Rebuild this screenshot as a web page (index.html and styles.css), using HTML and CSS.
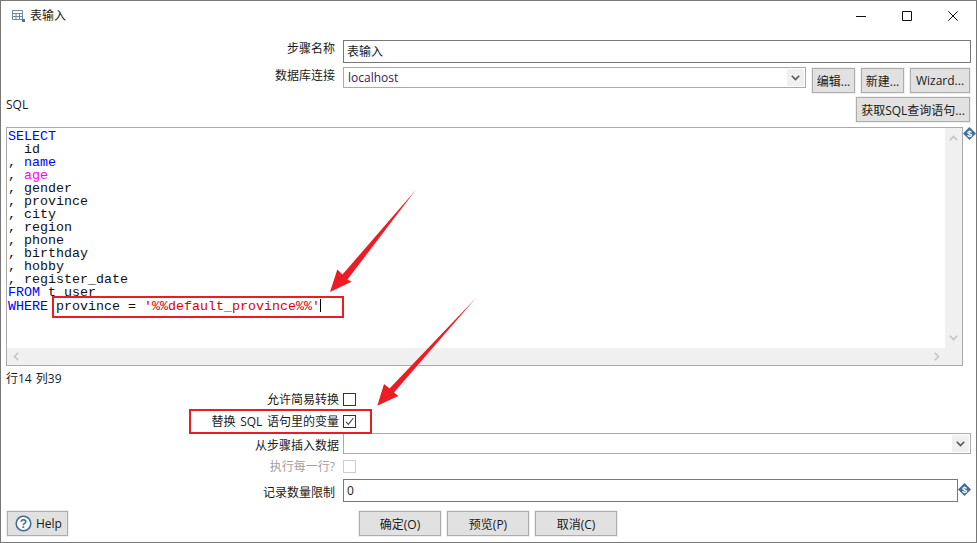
FILE: index.html
```html
<!DOCTYPE html>
<html lang="zh-CN">
<head>
<meta charset="utf-8">
<title>表输入</title>
<link rel="stylesheet" href="styles.css">
</head>
<body>
<div class="window">
  <header class="titlebar">
    <svg class="title-icon" width="14" height="14" viewBox="0 0 14 14"><path d="M.5 1.5h10v9H.5zM.5 4.5h10M.5 7.5h10M4 4.5v6M7.5 4.5v6" fill="none" stroke="#6f8ba0"/><rect x="10" y="10" width="3" height="3" fill="#4a7391"/></svg>
    <span class="title-text">表输入</span>
    <div class="win-controls">
      <svg width="10" height="10" viewBox="0 0 10 10"><path d="M0 5.5h10" stroke="#111"/></svg>
      <svg width="10" height="10" viewBox="0 0 10 10"><path d="M.5.5h9v9h-9z" fill="none" stroke="#111"/></svg>
      <svg width="10" height="10" viewBox="0 0 10 10"><path d="M.3.3l9.4 9.4M9.7.3L.3 9.7" stroke="#111" fill="none"/></svg>
    </div>
  </header>
  <main class="form">
    <div class="row row-name">
      <label class="label label-top">步骤名称</label>
      <div class="input dark grow">表输入</div>
    </div>
    <div class="row row-conn">
      <label class="label label-top">数据库连接</label>
      <div class="input select conn"><span class="conn-value">localhost</span><span class="chevbox"><svg width="9" height="6" viewBox="0 0 9 6"><path d="M.8.8l3.7 3.7L8.2.8" fill="none" stroke="#555" stroke-width="1.6"/></svg></span></div>
      <div class="conn-buttons">
        <button class="btn btn-edit">编辑...</button>
        <button class="btn btn-edit">新建...</button>
        <button class="btn btn-wizard">Wizard...</button>
      </div>
    </div>
    <div class="row-sql">
      <span class="sql-label">SQL</span>
      <button class="btn btn-query">获取SQL查询语句...</button>
    </div>
    <div class="editor-row">
      <div class="editor">
        <pre class="code"><span class="kw">SELECT</span>
  id
, <span class="kw">name</span>
, <span class="fn">age</span>
, gender
, province
, city
, region
, phone
, birthday
, hobby
, register_date
<span class="kw">FROM</span> t_user
<span class="kw">WHERE</span> province = <span class="str">'%%default_province%%'</span><span class="caret"></span></pre>
        <div class="vscroll">
          <span class="sb-btn"><svg width="9" height="6" viewBox="0 0 9 6"><path d="M.8 5.2l3.7-3.7 3.7 3.7" fill="none" stroke="#c4c4c4" stroke-width="1.6"/></svg></span>
          <span class="sb-btn"><svg width="9" height="6" viewBox="0 0 9 6"><path d="M.8.8l3.7 3.7L8.2.8" fill="none" stroke="#c4c4c4" stroke-width="1.6"/></svg></span>
        </div>
        <div class="hscroll">
          <span class="sb-btn-h"><svg width="6" height="9" viewBox="0 0 6 9"><path d="M5.2.8L1.5 4.5l3.7 3.7" fill="none" stroke="#c4c4c4" stroke-width="1.6"/></svg></span>
          <span class="sb-btn-h"><svg width="6" height="9" viewBox="0 0 6 9"><path d="M.8.8l3.7 3.7L.8 8.2" fill="none" stroke="#c4c4c4" stroke-width="1.6"/></svg></span>
        </div>
      </div>
      <svg class="var-icon" width="13" height="13" viewBox="0 0 13 13"><path d="M6.5 0L13 6.5 6.5 13 0 6.5z" fill="#3f6f95"/><text x="6.5" y="9.6" text-anchor="middle" class="var-s">$</text></svg>
    </div>
    <div class="status">行14 列39</div>
    <div class="row row-opt1">
      <label class="label label-wide label-up">允许简易转换</label>
      <span class="check"></span>
    </div>
    <div class="row row-opt2">
      <label class="label label-wide label-up label-spaced">替换 SQL 语句里的变量</label>
      <span class="check"><svg width="11" height="11" viewBox="0 0 11 11"><path d="M2 5.8l2.4 2.6L9.4 2" fill="none" stroke="#444" stroke-width="1.1"/></svg></span>
    </div>
    <div class="row row-step">
      <label class="label label-wide">从步骤插入数据</label>
      <div class="input select grow"><span class="chevbox"><svg width="9" height="6" viewBox="0 0 9 6"><path d="M.8.8l3.7 3.7L8.2.8" fill="none" stroke="#555" stroke-width="1.6"/></svg></span></div>
    </div>
    <div class="row row-exec">
      <label class="label label-off label-up">执行每一行?</label>
      <span class="check check-off"></span>
    </div>
    <div class="row row-limit">
      <label class="label label-limit">记录数量限制</label>
      <div class="input dark limit">0</div>
      <svg class="var-icon" width="13" height="13" viewBox="0 0 13 13"><path d="M6.5 0L13 6.5 6.5 13 0 6.5z" fill="#3f6f95"/><text x="6.5" y="9.6" text-anchor="middle" class="var-s">$</text></svg>
    </div>
    <footer class="footer">
      <button class="btn btn-help"><svg width="17" height="17" viewBox="0 0 17 17"><circle cx="8.5" cy="8.5" r="7.3" fill="#fff" stroke="#3f6f95" stroke-width="1.6"/><text x="8.5" y="12.6" text-anchor="middle" class="help-q">?</text></svg>Help</button>
      <div class="actions">
        <button class="btn btn-action">确定(O)</button>
        <button class="btn btn-action">预览(P)</button>
        <button class="btn btn-action">取消(C)</button>
      </div>
    </footer>
  </main>
  <svg class="annotations" width="977" height="543" viewBox="0 0 977 543">
    <rect x="53" y="297" width="290" height="20" fill="none" stroke="#ed1c24" stroke-width="2"/>
    <rect x="190" y="410" width="181" height="23" fill="none" stroke="#ed1c24" stroke-width="2"/>
    <path d="M330 292L337.3 269.5 342.5 274.5 415.7 190 347.5 279.5 351.5 281.7z" fill="#ed1c24"/>
    <path d="M377.3 405.7L384 384 389.5 388.5 475.7 298.3 394 392.5 398.3 396z" fill="#ed1c24"/>
  </svg>
</div>
</body>
</html>
```
FILE: styles.css
```css
* { box-sizing: border-box; }
html, body { margin: 0; padding: 0; background: #fff; }
body {
  width: 977px;
  height: 543px;
  overflow: hidden;
  font-family: "Open Sans", "Noto Sans CJK SC", sans-serif;
  font-size: 12px;
  color: #1a1a1a;
}
.window {
  position: relative;
  width: 977px;
  height: 543px;
  border: 1px solid #777;
  background: #fff;
}
.titlebar {
  display: flex;
  align-items: center;
  height: 29px;
  padding: 0 18px 0 11px;
}
.title-icon { margin-right: 4px; }
.title-text { line-height: 16px; }
.win-controls { display: flex; gap: 36px; margin-left: auto; }
.win-controls svg { display: block; }
.form {
  display: flex;
  flex-direction: column;
  padding: 10px 5px 0 5px;
}
.row {
  display: grid;
  grid-template-columns: 329px minmax(0, 1fr);
  column-gap: 8px;
  align-items: start;
}
.label {
  text-align: right;
  line-height: 16px;
  white-space: nowrap;
}
.label-top { margin-top: 1px; }
.label-wide { margin-right: -4px; }
.label-up { margin-top: -1px; }
.label-spaced { word-spacing: 1.5px; }
.label-off { color: #a0a0a0; }
.input {
  height: 21px;
  border: 1px solid #aaa;
  background: #fff;
  padding-left: 3px;
  line-height: 21px;
  position: relative;
}
.input.dark { height: 23px; border-color: #777; }
.row-name { height: 23px; }
.row-conn {
  grid-template-columns: 329px 463px auto;
  column-gap: 8px;
  height: 26px;
  margin-top: 4px;
}
.row-conn .conn-buttons { margin-left: -2px; margin-top: 1px; }
.conn-value { color: #3a1a50; }
.select { display: flex; justify-content: flex-end; padding: 1px; }
.select .conn-value { margin-right: auto; padding-left: 3px; line-height: 18px; }
.chevbox {
  display: flex;
  align-items: center;
  justify-content: center;
  width: 17px;
  height: 17px;
  background: #f0f0f0;
}
.conn-buttons { display: flex; gap: 6px; }
.btn {
  display: inline-flex;
  flex: none;
  align-items: center;
  justify-content: center;
  height: 25px;
  padding: 0;
  border: 1px solid #adadad;
  outline: 1px solid #efefef;
  background: #e1e1e1;
  color: #1a1a1a;
  font: inherit;
}
.btn-edit { width: 43px; }
.btn-wizard { width: 60px; }
.row-sql {
  display: flex;
  justify-content: space-between;
  align-items: flex-start;
  height: 25px;
  margin-top: 4px;
  padding-right: 1px;
}
.sql-label { line-height: 16px; }
.btn-query { width: 114px; }
.editor-row { display: flex; margin: 5px -6px 0 0; }
.editor {
  position: relative;
  flex: none;
  width: 957px;
  height: 239px;
  border: 1px solid #aaa;
  background: #fff;
  padding-right: 17px;
}
.code {
  margin: 0;
  padding: 2px 0 0 1px;
  font-family: "Liberation Mono", monospace;
  font-size: 13.33px;
  line-height: 13px;
  color: #111;
}
.kw { color: #0000ff; }
.fn { color: #ff00ff; }
.str { color: #e00000; }
.caret {
  display: inline-block;
  width: 1px;
  height: 13px;
  background: #000;
  vertical-align: -2px;
}
.vscroll {
  position: absolute;
  top: 0;
  right: 0;
  bottom: 17px;
  width: 17px;
  display: flex;
  flex-direction: column;
  justify-content: space-between;
  background: #f0f0f0;
}
.sb-btn { display: flex; align-items: center; justify-content: center; height: 20px; }
.hscroll {
  position: absolute;
  left: 0;
  right: 0;
  bottom: 0;
  height: 17px;
  padding-right: 17px;
  display: flex;
  justify-content: space-between;
  background: #f0f0f0;
}
.sb-btn-h { display: flex; align-items: center; justify-content: center; width: 17px; }
.var-icon { display: block; flex: none; }
.var-s { font-family: "Liberation Sans", sans-serif; font-size: 9px; font-weight: 700; fill: #fff; }
.status { height: 16px; margin-top: 5px; line-height: 16px; word-spacing: 1px; }
.check {
  display: flex;
  align-items: center;
  justify-content: center;
  width: 13px;
  height: 13px;
  border: 1px solid #333;
  background: #fff;
}
.check-off { border-color: #ccc; }
.row-opt1 { height: 13px; margin-top: 6px; }
.row-opt2 { height: 13px; margin-top: 9px; }
.row-step { height: 21px; margin-top: 5px; }
.row-step .label { margin-top: 5px; }
.row-exec { height: 13px; margin-top: 6px; }
.row-limit {
  grid-template-columns: 329px 615px 13px;
  height: 23px;
  margin-top: 6px;
}
.row-limit .var-icon { margin: 4px 0 0 -8px; }
.label-limit { margin-top: 6px; }
.footer { display: flex; height: 25px; margin-top: 9px; padding-left: 1px; }
.btn-help { width: 61px; gap: 4px; justify-content: flex-start; padding-left: 7px; }
.help-q { font-family: "Liberation Sans", sans-serif; font-size: 12px; font-weight: 700; fill: #3f6f95; }
.actions { display: flex; gap: 6px; margin-left: 291px; }
.btn-action { width: 82px; }
.annotations { position: absolute; left: -1px; top: -1px; pointer-events: none; }
```
